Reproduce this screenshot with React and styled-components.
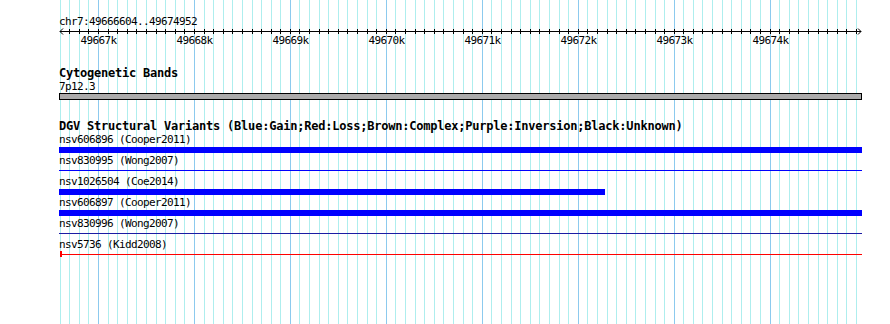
import React from 'react'
import styled, { createGlobalStyle } from 'styled-components'

const START = 49666604
const END = 49674952
const ORIGIN = 60
const SCALE = 801 / (END - START)
const TRACK_LEFT = 59
const TRACK_WIDTH = 803

const toX = pos => ORIGIN + (pos - START) * SCALE

const GlobalStyle = createGlobalStyle`
  html, body {
    margin: 0;
    padding: 0;
    background: #fff;
  }
`

const Panel = styled.div`
  position: relative;
  width: 890px;
  height: 324px;
  overflow: hidden;
  background: #fff;
`

const GridLayer = styled.svg`
  position: absolute;
  left: 0;
  top: 0;
  width: 890px;
  height: 324px;
`

const Tracks = styled.div`
  position: relative;
  display: flex;
  flex-direction: column;
  padding: 15px 0 0 ${TRACK_LEFT}px;
  width: ${TRACK_WIDTH}px;
`

const Label = styled.div`
  height: 13px;
  font-family: 'DejaVu Sans Mono', 'Liberation Mono', monospace;
  font-size: 11px;
  line-height: 13px;
  letter-spacing: -0.62px;
  color: #000;
  white-space: nowrap;
`

const Title = styled.div`
  height: 13px;
  margin-top: ${props => props.$gap}px;
  font-family: 'DejaVu Sans Mono', 'Liberation Mono', monospace;
  font-size: 12px;
  font-weight: bold;
  line-height: 13px;
  letter-spacing: -0.22px;
  color: #000;
  white-space: nowrap;
`

const RulerSvg = styled.svg`
  display: block;
  width: ${TRACK_WIDTH}px;
  height: 20px;
  overflow: visible;

  text {
    font-family: 'DejaVu Sans Mono', 'Liberation Mono', monospace;
    font-size: 11px;
    letter-spacing: -0.62px;
    fill: #000;
  }
`

const Band = styled.div`
  height: 5px;
  border: 1px solid #000;
  background: #aaaaaa;
  width: ${TRACK_WIDTH - 2}px;
`

const FeatureRow = styled.div`
  display: flex;
  flex-direction: column;
  height: 21px;
`

const BarSlot = styled.div`
  position: relative;
  height: 8px;
`

const Bar = styled.div`
  position: absolute;
  top: ${props => (props.$thick ? 1 : 3)}px;
  height: ${props => (props.$thick ? 6 : 1)}px;
  background: ${props => props.$color};
`

const StartMark = styled.div`
  position: absolute;
  left: 1px;
  top: 0;
  width: 2px;
  height: 6px;
  background: ${props => props.$color};
`

const features = [
  { name: 'nsv606896 (Cooper2011)', start: 49660000, end: 49680000, thick: true, color: '#0000ff' },
  { name: 'nsv830995 (Wong2007)', start: 49660000, end: 49680000, color: '#0000ff' },
  { name: 'nsv1026504 (Coe2014)', start: 49660000, end: 49672284, thick: true, color: '#0000ff' },
  { name: 'nsv606897 (Cooper2011)', start: 49660000, end: 49680000, thick: true, color: '#0000ff' },
  { name: 'nsv830996 (Wong2007)', start: 49660000, end: 49680000, color: '#1c1ca4' },
  { name: 'nsv5736 (Kidd2008)', start: 49666604, end: 49680000, color: '#ff0000', mark: true },
]

const gridPositions = []
for (let p = 49666600; p <= 49674900; p += 100) gridPositions.push(p)

const Grid = () => (
  <GridLayer>
    {gridPositions.map(p => {
      const x = Math.round(toX(p)) + 0.5
      const major = p % 1000 === 0
      return (
        <line
          key={p}
          x1={x}
          x2={x}
          y1={0}
          y2={324}
          stroke={major ? '#8ccaee' : '#aeeeee'}
          strokeWidth="1"
        />
      )
    })}
  </GridLayer>
)

const Ruler = () => {
  const local = p => Math.round(toX(p)) - TRACK_LEFT + 0.5
  return (
    <RulerSvg>
      <line x1="1" x2="802" y1="3.5" y2="3.5" stroke="#000" />
      <polyline points="4,0.5 1,3.5 4,6.5" fill="none" stroke="#000" />
      <polyline points="799,0.5 802,3.5 799,6.5" fill="none" stroke="#000" />
      {gridPositions.slice(1).map(p => (
        <line key={p} x1={local(p)} x2={local(p)} y1="1" y2="6" stroke="#000" />
      ))}
      {gridPositions
        .filter(p => p % 1000 === 0)
        .map(p => (
          <text key={p} x={local(p)} y="16" textAnchor="middle">
            {p / 1000}k
          </text>
        ))}
    </RulerSvg>
  )
}

const Feature = ({ name, start, end, thick, color, mark }) => {
  const left = Math.max(toX(start), TRACK_LEFT) - TRACK_LEFT
  const right = Math.min(toX(end), TRACK_LEFT + TRACK_WIDTH) - TRACK_LEFT
  return (
    <FeatureRow>
      <Label>{name}</Label>
      <BarSlot>
        <Bar
          $thick={thick}
          $color={color}
          style={{ left: Math.round(left), width: Math.round(right - left) }}
        />
        {mark && <StartMark $color={color} />}
      </BarSlot>
    </FeatureRow>
  )
}

export default function App() {
  return (
    <Panel>
      <GlobalStyle />
      <Grid />
      <Tracks>
        <Label>chr7:49666604..49674952</Label>
        <Ruler />
        <Title $gap={19}>Cytogenetic Bands</Title>
        <Label>7p12.3</Label>
        <Band />
        <Title $gap={20}>
          DGV Structural Variants (Blue:Gain;Red:Loss;Brown:Complex;Purple:Inversion;Black:Unknown)
        </Title>
        {features.map(f => (
          <Feature key={f.name} {...f} />
        ))}
      </Tracks>
    </Panel>
  )
}
